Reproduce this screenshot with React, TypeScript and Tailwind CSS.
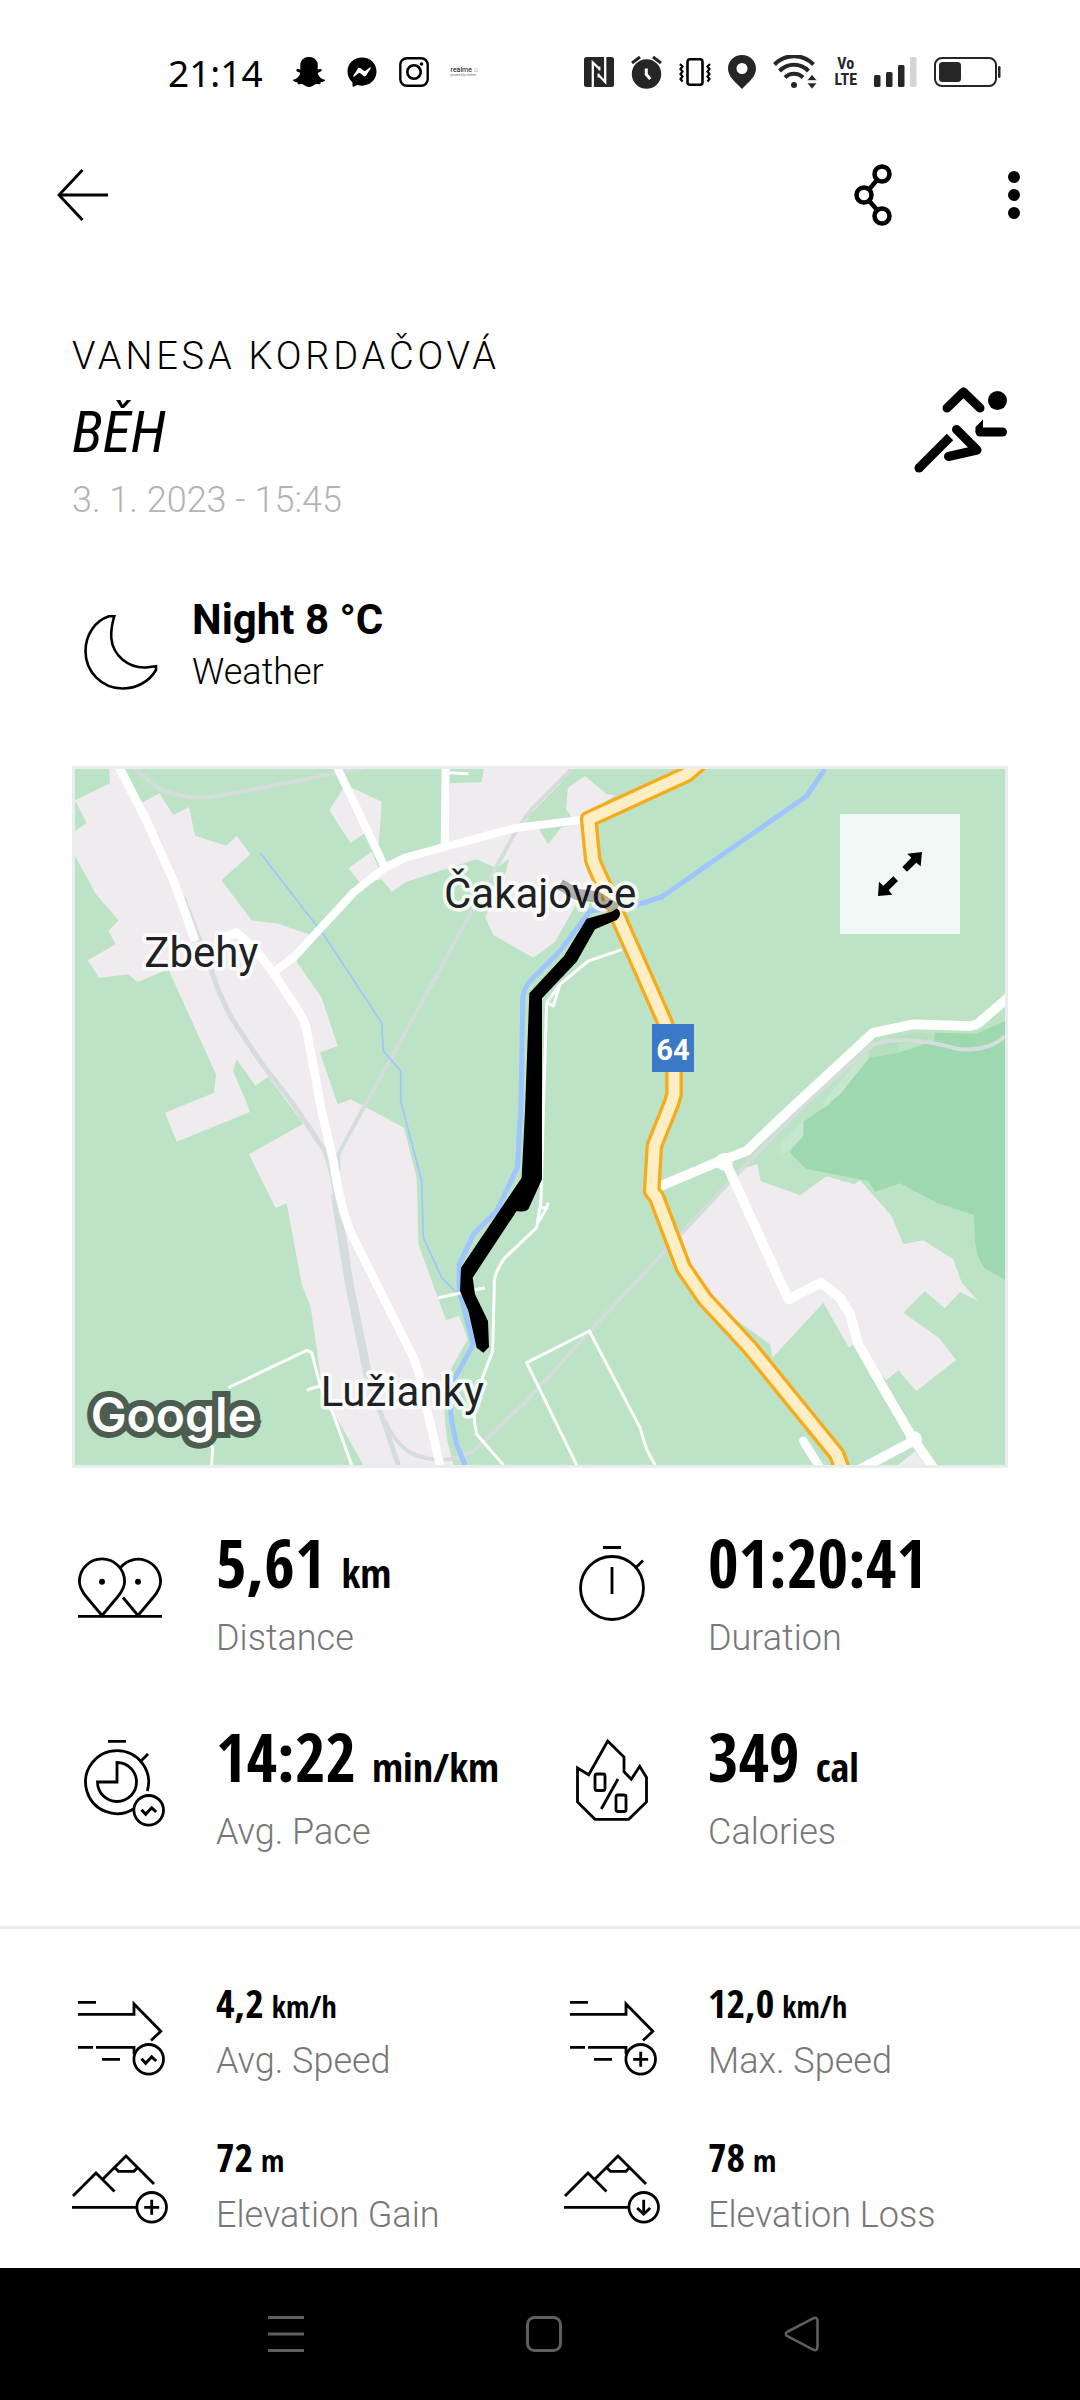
import type { ReactNode } from "react";
import { FaFacebookMessenger, FaSnapchatGhost } from "react-icons/fa";

interface Stat {
  value: string;
  unit?: string;
  label: string;
  icon: ReactNode;
}

function StatIcon({ children }: { children: ReactNode }) {
  return (
    <svg
      viewBox="0 0 96 96"
      className="size-24 shrink-0"
      fill="none"
      stroke="black"
      strokeWidth="2.8"
      aria-hidden="true"
    >
      {children}
    </svg>
  );
}

function DistanceIcon() {
  return (
    <StatIcon>
      <path d="M30 75.5 14.5 57C9.5 51 7.4 46.5 7.4 41.5a22.6 22.6 0 0 1 45.2 0c0 5-2.1 9.5-7.1 15.5z" />
      <path d="M48.7 27.3a22.6 22.6 0 0 1 39.9 14.2c0 5-2.1 9.5-7.1 15.5L66 75.5 51 57.5M6 76.3h84" />
      <circle cx="30" cy="41.7" r="3" fill="black" stroke="none" />
      <circle cx="66" cy="41.7" r="3" fill="black" stroke="none" />
    </StatIcon>
  );
}

function DurationIcon() {
  return (
    <StatIcon>
      <circle cx="48" cy="48" r="31.5" />
      <path d="M39 7.5h18M48 27v27M72 27.5l7-7" />
    </StatIcon>
  );
}

function WaveBadge() {
  return (
    <>
      <circle cx="76.7" cy="76.3" r="14.8" />
      <path d="M69.5 75.8l4.2 4.5 6-6.5 4.5 4.2" strokeWidth="3" />
    </>
  );
}

function PaceIcon() {
  return (
    <StatIcon>
      <path d="M36 7.3h18M69 27l7-7M75.3 57A31.5 31.5 0 1 0 61.5 75" />
      <path d="M45 48V28.5A19.5 19.5 0 1 1 25.5 48z" />
      <WaveBadge />
    </StatIcon>
  );
}

function CaloriesIcon() {
  return (
    <StatIcon>
      <path d="M13.5 34l11.2 6.7L43.7 7 60 23v14.7l7.3 7.6 8.4-13 6.8 11.2V68L64.7 85.3H31L13.5 68z" />
      <rect x="31" y="40" width="10" height="16.5" rx="2" />
      <rect x="52" y="61" width="10" height="16.5" rx="2" />
      <path d="M54 45 37.3 75" />
    </StatIcon>
  );
}

function SpeedLines() {
  return (
    <path d="M6 19.3h18M6 31.3h56V21l26.8 27.3L79 57.5M6 64.3h15M24 64.3h38v7M30 76.3h18" />
  );
}

function AvgSpeedIcon() {
  return (
    <StatIcon>
      <SpeedLines />
      <WaveBadge />
    </StatIcon>
  );
}

function MaxSpeedIcon() {
  return (
    <StatIcon>
      <SpeedLines />
      <circle cx="76.7" cy="76.3" r="14.8" />
      <path d="M69.2 76.3h15M76.7 68.8v15" />
    </StatIcon>
  );
}

function Mountains() {
  return (
    <>
      <path d="M1 59l23-23 18.5 18.5M31 42l23-23 28 28M42.5 30.5l4 3.8H62l3.8-4M0 70.3h64.5" />
      <circle cx="79.7" cy="70.3" r="14.8" />
    </>
  );
}

function GainIcon() {
  return (
    <StatIcon>
      <Mountains />
      <path d="M72.2 70.3h15M79.7 62.8v15" />
    </StatIcon>
  );
}

function LossIcon() {
  return (
    <StatIcon>
      <Mountains />
      <path d="M79.7 62.8v14M73.2 71l6.5 6 6.5-6" />
    </StatIcon>
  );
}

const mainStats: Stat[] = [
  { value: "5,61", unit: "km", label: "Distance", icon: <DistanceIcon /> },
  { value: "01:20:41", label: "Duration", icon: <DurationIcon /> },
  { value: "14:22", unit: "min/km", label: "Avg. Pace", icon: <PaceIcon /> },
  { value: "349", unit: "cal", label: "Calories", icon: <CaloriesIcon /> },
];

const extraStats: Stat[] = [
  { value: "4,2", unit: "km/h", label: "Avg. Speed", icon: <AvgSpeedIcon /> },
  { value: "12,0", unit: "km/h", label: "Max. Speed", icon: <MaxSpeedIcon /> },
  { value: "72", unit: "m", label: "Elevation Gain", icon: <GainIcon /> },
  { value: "78", unit: "m", label: "Elevation Loss", icon: <LossIcon /> },
];

function StatusBar() {
  return (
    <div className="flex h-36 items-center justify-between pl-[168px] pr-[79px]">
      <div className="flex items-center gap-[30px]">
        <span className="font-['Noto_Sans','Open_Sans',sans-serif] text-[37px] leading-none">21:14</span>
        <div className="flex items-center gap-[22px]">
          <FaSnapchatGhost className="size-8" />
          <FaFacebookMessenger className="size-[30px]" />
          <svg viewBox="0 0 30 30" className="size-[30px]" fill="none" stroke="black" aria-hidden="true">
            <rect x="1.3" y="1.3" width="27.4" height="27.4" rx="6.5" strokeWidth="2.4" />
            <circle cx="15" cy="15" r="6.7" strokeWidth="2.6" />
            <circle cx="22.5" cy="7" r="1.8" fill="black" stroke="none" />
          </svg>
          <div className="flex flex-col leading-none">
            <span className="text-[7px]">
              realme <span className="text-indigo-300">u</span>
            </span>
            <span className="text-[3px] text-gray-500">powered by realme</span>
          </div>
        </div>
      </div>

      <div className="flex items-center gap-[17px] text-[#262626]">
        <svg viewBox="0 0 30 30" className="size-[30px]" aria-hidden="true">
          <rect width="30" height="30" rx="2.5" fill="currentColor" />
          <path d="M8.8 30V5.5L15.5 12M21.2 0v25L14.5 18" fill="none" stroke="white" strokeWidth="2.3" />
          <path d="M15.5 9.5v4M14.5 16.5v4" stroke="white" strokeWidth="1.8" />
        </svg>
        <svg viewBox="0 0 31 34" className="h-[34px] w-[31px]" aria-hidden="true">
          <circle cx="15.5" cy="19" r="14.7" fill="currentColor" />
          <path d="M1 8l8-6M30 8l-8-6" stroke="currentColor" strokeWidth="3" />
          <path d="M15.3 13.5v6l4 4.5" stroke="white" strokeWidth="3" fill="none" />
        </svg>
        <svg viewBox="0 0 32 30" className="h-[30px] w-8" fill="none" stroke="black" aria-hidden="true">
          <rect x="8.5" y="2.2" width="15" height="25.5" rx="2.5" strokeWidth="2.6" />
          <path
            d="M1 7l2.5 2.5-2 2.5 2 2.5-2 2.5 2 2.5-2 2.5 2 2.5M31 7l-2.5 2.5 2 2.5-2 2.5 2 2.5-2 2.5 2 2.5-2 2.5"
            strokeWidth="2.2"
          />
        </svg>
        <svg viewBox="0 0 28 34" className="h-[34px] w-7" aria-hidden="true">
          <path
            d="M14 0C6 0 0 6 0 13.5 0 22 7.5 27 14 34 20.5 27 28 22 28 13.5 28 6 22 0 14 0zm0 8a5.5 5.5 0 1 1 0 11 5.5 5.5 0 0 1 0-11z"
            fill="currentColor"
          />
        </svg>
        <svg viewBox="0 0 44 34" className="h-[34px] w-11" fill="none" stroke="currentColor" aria-hidden="true">
          <path d="M1.5 9.5a27 27 0 0 1 39 0M6.5 16a20 20 0 0 1 29 0M12 22.5a12.5 12.5 0 0 1 18 0" strokeWidth="4" />
          <circle cx="21" cy="30" r="3" fill="currentColor" stroke="none" />
          <path d="M34 25.5l5-6 5 6zM34 28h10l-5 6z" fill="currentColor" stroke="white" strokeWidth="0.6" />
        </svg>
        <div className="flex flex-col items-center font-['Roboto_Condensed','Open_Sans_Condensed',sans-serif] text-[16px] font-bold leading-4">
          <span>Vo</span>
          <span>LTE</span>
        </div>
        <svg viewBox="0 0 43 30" className="h-[30px] w-[43px]" fill="currentColor" aria-hidden="true">
          <rect y="18" width="6.5" height="12" rx="1.5" />
          <rect x="12" y="15" width="6.5" height="15" rx="1.5" />
          <rect x="24" y="8" width="6.5" height="22" rx="1.5" />
          <rect x="36" width="6.5" height="30" rx="1.5" fill="#d4d4d4" />
        </svg>
        <svg viewBox="0 0 67 30" className="h-[30px] w-[67px]" aria-hidden="true">
          <rect x="1" y="1" width="61" height="28" rx="7" fill="none" stroke="currentColor" strokeWidth="2" />
          <rect x="5" y="5" width="22" height="20" rx="3.5" fill="currentColor" />
          <rect x="64" y="9" width="2.5" height="12" rx="1.2" fill="currentColor" />
        </svg>
      </div>
    </div>
  );
}

function RouteMap() {
  return (
    <div className="relative border-[3px] border-[#e9edf0] bg-[#bce3c6]">
      <svg viewBox="45 54 2790 2088" className="block w-full" role="img" aria-label="Route map">
        <rect x="45" y="54" width="2790" height="2088" fill="#bce3c6" />

        {/* built-up areas */}
        <g fill="#f0ebef">
          <path d="M148 54 150 97 45 148 80 216 45 240V315L108 430 176 508 145 540 167 580 83 628 118 680 205 670 232 693 325 655 468 970 462 1025 315 1085 350 1172 570 1083 558 1050 519 960 530 925 586 1004 625 977 730 1118 567 1210 647 1371 680 1357 725 1600 752 1668 790 1930 910 2142H1180L1160 2060 1150 1950 1175 1850 1223 1765 1198 1694 1158 1707 1075 1480 1070 1280 1032 1130 873 1045 833 1060 780 905 833 885 785 740 710 632 745 550 655 518 575 508 484 388 571 310 530 254 500 284 405 254 387 168 340 193 298 127 245 156 192 54z" />
          <path d="M808 178 850 112 880 112 965 152 957 280 912 248 872 276z" />
          <path d="M935 302 865 352 900 395 965 385 995 422 1040 392 1165 352 1250 325 1310 352 1348 322 1335 370 1300 440 1276 500 1300 552 1420 620 1485 572 1560 440 1640 420 1600 330 1575 215 1505 228 1464 280 1435 232 1380 230 1500 100 1540 54H1272L1265 93 1170 97 1155 290 1030 315 965 370z" />
          <path d="M1523 110 1575 75 1640 130 1665 132 1570 200H1535L1518 175z" />
        </g>
        <path d="M1400 200 1560 40 1640 54 1560 80 1523 110 1518 175 1535 200z" fill="#bce3c6" />

        <g transform="translate(1380 1050)">
          <path d="M1455-240 1370-202 1245-205 1240-180 1135-145 1045-130 960-20 930 5 850 62V105L808 153 858 203 1045 240 1065 272 1140 247 1250 305 1362 342 1365 420Q1370 470 1392 500L1455 537z" fill="#9dd8ae" />
          <path d="M1045-160 905 10 935 5 850 60 780 125 785 165 850 105V62L960-20 1045-125z" fill="#c5e6cf" />
          <path d="M1045-165 1180-205 1235-200 1245-188 1135-170V-145L1048-130z" fill="#b5dfbd" />
          <path d="M665 205 712 188 722 240 840 283 920 226 1003 250 1020 238 1115 345 1150 430 1210 418 1300 475 1325 545 1375 600 1320 573 1274 622 1215 570 1150 635 1258 712 1308 777 1189 870 1135 808 1100 838 1000 730 987 740 910 605 757 770 750 730 600 620 515 495 483 405zM1135 1092 1185 1050 1215 1092z" fill="#f0ebef" />
        </g>

        {/* railways */}
        <g fill="none" stroke="#d5dcdc" strokeWidth="12">
          <path d="M225 54 300 115Q390 150 470 136L620 108 910 50" />
          <path d="M1535 54 1415 175Q1370 230 1330 310L1230 490 1000 910 900 1090 835 1210V1260" />
          <path d="M370 440 455 660Q480 740 520 810L600 930 700 1060 795 1200Q820 1270 830 1350L870 1610 920 1860 960 1980 1015 2142" strokeWidth="15" />
          <path d="M825 1330 870 1610 925 1880" strokeWidth="26" />
          <path d="M975 2010Q1000 2070 1050 2105 1150 2150 1240 2100L1400 1950 1590 1740 2040 1260 2235 1060 2440 880Q2540 850 2700 895 2790 900 2835 855" />
        </g>

        {/* rivers */}
        <g fill="none" stroke="#9fc5ff" strokeLinejoin="round">
          <path d="M2295 54 2240 135 1805 438 1735 460 1590 480 1500 600 1410 690Q1385 720 1388 760L1383 1050 1372 1250 1310 1380 1240 1450 1198 1540V1620L1240 1780 1185 1880Q1165 1940 1175 2010L1190 2080 1215 2142" strokeWidth="15" />
          <path d="M600 305 790 550 965 815 970 900 1022 960V1050L1085 1290 1090 1460 1145 1580 1190 1625" strokeWidth="5" />
        </g>

        {/* minor roads */}
        <g fill="none" stroke="white" strokeWidth="9" strokeLinejoin="round">
          <path d="M505 1910 600 1865 740 1798 755 1805 780 1900 820 1990 875 2142M740 1917 780 1905M455 2142 458 2090 430 2040M1135 1640 1275 1610M1165 65 1225 68" />
          <path d="M1685 596 1585 630 1500 700 1460 755 1450 1080 1443 1350 1430 1430 1335 1520Q1300 1570 1303 1600L1298 1800 1260 1900Q1230 1960 1250 2050L1330 2142M1500 700 1480 765 1460 755M1465 1355 1455 1380 1430 1420M1440 1370H1465" />
          <path d="M1550 2142 1400 1835 1588 1740 1740 2030 1760 2095 1785 2142" />
        </g>

        {/* main roads */}
        <g fill="none" stroke="white" strokeWidth="26" strokeLinejoin="round">
          <path d="M178 50 260 210 345 400 395 540 405 570M490 560 530 545 590 600 640 665 715 780Q740 820 742 850L785 1080 820 1230Q840 1370 875 1450L1060 1820Q1080 1870 1090 1930L1140 2142" />
          <path d="M640 665 705 615 880 425 975 350 1035 320 1370 230 1580 205" strokeWidth="24" />
          <path d="M832 50 975 350M1157 50 1154 285" strokeWidth="24" />
          <path d="M1795 1308 1980 1230 2060 1200 2180 1085 2440 845 2560 820 2730 825Q2750 823 2765 808L2850 735M1995 1230 2185 1645 2283 1595 2340 1640 2370 1690 2395 1780 2475 1920 2560 2065 2620 2150M2560 2070 2400 2155" strokeWidth="29" />
          <path d="M2230 2070 2280 2150" strokeWidth="26" strokeLinecap="round" />
        </g>
        <circle cx="1992" cy="1232" r="26" fill="white" />
        <circle cx="2562" cy="2065" r="24" fill="white" />

        <g fill="none" strokeLinejoin="round">
          <path d="M1920 35 1880 70 1586 205 1598 325Q1605 350 1640 420L1815 815 1842 900V1030L1835 1055 1783 1185 1775 1320 1790 1340 1870 1550 1935 1645 2070 1790 2330 2110 2345 2150" stroke="#f5ab1b" strokeWidth="53" />
          <path d="M1920 35 1880 70 1586 205 1598 325Q1605 350 1640 420L1815 815 1842 900V1030L1835 1055 1783 1185 1775 1320 1790 1340 1870 1550 1935 1645 2070 1790 2330 2110 2345 2150" stroke="#ffedc3" strokeWidth="33" />
        </g>

        {/* recorded track */}
        <path
          d="M1655 482 1580 503 1512 615 1408 727 1395 1080 1385 1280 1203 1550 1200 1620 1225 1680 1250 1790 1270 1805 1287 1788 1284 1710 1245 1630 1238 1580 1370 1380Q1395 1385 1405 1375L1446 1285V742L1550 632 1605 535 1670 507Q1690 490 1672 472z"
          fill="black"
        />

        <rect x="1776" y="819" width="126" height="144" fill="#3c78c8" />
        <text x="1839" y="926" textAnchor="middle" className="font-['Roboto',sans-serif] text-[87px] font-bold" fill="white">
          64
        </text>

        <g
          className="font-['Roboto',sans-serif] text-[126px]"
          fill="#202124"
          stroke="white"
          strokeOpacity="0.8"
          strokeWidth="22"
          strokeLinejoin="round"
          paintOrder="stroke"
        >
          <text x="253" y="647">Zbehy</text>
          <text x="1152" y="471">Čakajovce</text>
          <text x="782" y="1965">Lužianky</text>
        </g>
        <path d="M1500 400 1550 430 1610 438 1670 475" fill="none" stroke="black" strokeOpacity="0.3" strokeWidth="34" />

        <text
          x="92"
          y="2044"
          className="font-['Inter',sans-serif] text-[144px] font-semibold"
          fill="white"
          stroke="#4c5c50"
          strokeWidth="36"
          paintOrder="stroke"
        >
          Google
        </text>
      </svg>
      <button
        type="button"
        aria-label="Expand map"
        className="absolute right-[45px] top-[45px] size-[120px] bg-[#f1f7f4]"
      >
        <svg viewBox="0 0 360 360" className="size-full" aria-hidden="true">
          <path d="M246 114 202 119 214 131 187 159 201 173 229 146 242 157zM114 246 117 203 130 215 160 187 174 201 146 229 157 242z" />
        </svg>
      </button>
    </div>
  );
}

function NavBar() {
  return (
    <nav className="mt-auto flex h-[132px] items-center justify-center gap-[222px] bg-black pl-2">
      <button type="button" aria-label="Recent apps">
        <svg viewBox="0 0 36 36" className="size-9" fill="none" stroke="#5e5e5e" strokeWidth="3">
          <path d="M0 1.5h36M0 18h36M0 34.5h36" />
        </svg>
      </button>
      <button type="button" aria-label="Home">
        <svg viewBox="0 0 36 36" className="size-9" fill="none" stroke="#5e5e5e" strokeWidth="3">
          <rect x="1.5" y="1.5" width="33" height="33" rx="7" />
        </svg>
      </button>
      <button type="button" aria-label="Back">
        <svg viewBox="0 0 36 36" className="size-9" fill="none" stroke="#5e5e5e" strokeWidth="2.6">
          <path d="M3 16 29.5 2.2Q33.5 1 33.5 5V31Q33.5 35 29.5 33.8L3 20Q.5 18 3 16z" />
        </svg>
      </button>
    </nav>
  );
}

export default function App() {
  return (
    <div className="flex min-h-screen flex-col bg-white font-['Roboto',sans-serif] text-black">
      <StatusBar />

      <header className="flex h-[102px] items-center justify-between pl-[57px] pr-[54px]">
        <button type="button" aria-label="Back">
          <svg viewBox="0 0 51 54" className="h-[54px] w-[51px]" fill="none" stroke="black" strokeWidth="2.8">
            <path d="M25.5 2 2 27l23.5 25M2 27h49" />
          </svg>
        </button>
        <div className="flex items-center gap-[93px]">
          <button type="button" aria-label="Share">
            <svg viewBox="0 0 60 62" className="h-[62px] w-[60px]" fill="none" stroke="black" strokeWidth="4.5">
              <circle cx="33" cy="10" r="7.5" />
              <circle cx="15" cy="31" r="7.5" />
              <circle cx="33" cy="52" r="7.5" />
              <path d="M20 25.5 28 16M20 36.5l8 9.500" />
            </svg>
          </button>
          <button type="button" aria-label="More options">
            <svg viewBox="0 0 24 48" className="h-12 w-6">
              <circle cx="12" cy="6" r="6" />
              <circle cx="12" cy="24" r="6" />
              <circle cx="12" cy="42" r="6" />
            </svg>
          </button>
        </div>
      </header>

      <main className="pt-[86px]">
        <section className="flex items-center justify-between px-[72px]">
          <div>
            <p className="text-[38px] font-light leading-[48px] tracking-widest">VANESA KORDAČOVÁ</p>
            <h1 className="mt-5 font-['Roboto_Condensed','Open_Sans_Condensed',sans-serif] text-[58px] italic leading-[64px]">
              BĚH
            </h1>
            <p className="mt-3 text-[36px] font-light leading-[48px] text-[#b1b4b7]">3. 1. 2023 - 15:45</p>
          </div>
          <svg
            viewBox="0 0 94 88"
            className="mt-1 h-[88px] w-[94px]"
            fill="none"
            stroke="black"
            strokeWidth="9"
            strokeLinecap="round"
            strokeLinejoin="round"
            aria-hidden="true"
          >
            <path d="M33 22 49.5 6 66 22" />
            <path d="M42.5 43.5 63 64 34.5 70.5" />
            <path d="M66 46h22.5" />
            <path d="M61.5 46v-5L69 33.5V46z" fill="black" stroke="none" />
            <path d="M5 82 36 51" strokeLinecap="butt" />
            <circle cx="5" cy="82" r="4.5" fill="black" stroke="none" />
            <circle cx="83.5" cy="14.5" r="9.5" fill="black" stroke="none" />
          </svg>
        </section>

        <section className="mt-[72px] flex gap-6 px-[72px]">
          <svg
            viewBox="0 0 96 96"
            className="mt-2 size-24"
            fill="none"
            stroke="black"
            strokeWidth="2.6"
            aria-hidden="true"
          >
            <path d="M36.9 12.3H42.2C40 20 38.8 28 39.3 34 40.8 52 56.8 64 73.4 63.5 77.5 63.5 80 62.5 84 62.2V66C77 78 64 84.5 50.6 84.5 30 84.5 13.5 68 13.5 47 13.5 31 22.8 17 36.9 12.3z" />
          </svg>
          <div>
            <p className="text-[42px] font-bold leading-[48px]">Night 8 °C</p>
            <p className="mt-1 text-[36px] font-light leading-[48px]">Weather</p>
          </div>
        </section>

        <section className="px-[72px] pt-[66px]">
          <RouteMap />
        </section>

        <section className="grid grid-cols-2 gap-y-[58px] pb-[70px] pl-[72px] pr-6 pt-[58px]">
          {mainStats.map((stat) => (
            <div key={stat.label} className="flex items-start gap-12">
              <div className="pt-3.5">{stat.icon}</div>
              <div>
                <p className="flex items-baseline gap-4 font-['Open_Sans_Condensed','Roboto_Condensed',sans-serif] text-[66px] font-bold leading-[72px]">
                  {stat.value}
                  {stat.unit && <span className="text-[40px] leading-none">{stat.unit}</span>}
                </p>
                <p className="mt-4 text-[36px] font-light leading-[48px] text-[#777777]">{stat.label}</p>
              </div>
            </div>
          ))}
        </section>

        <hr className="border-t-[3px] border-[#ebecf0]" />

        <section className="grid grid-cols-2 gap-y-[52px] pb-6 pl-[72px] pr-6 pt-[54px]">
          {extraStats.map((stat) => (
            <div key={stat.label} className="flex items-start gap-12">
              {stat.icon}
              <div>
                <p className="flex items-baseline gap-2 font-['Open_Sans_Condensed','Roboto_Condensed',sans-serif] text-[40px] font-bold leading-[40px]">
                  {stat.value}
                  {stat.unit && <span className="text-[30px] leading-none">{stat.unit}</span>}
                </p>
                <p className="mt-3.5 text-[36px] font-light leading-[48px] text-[#777777]">{stat.label}</p>
              </div>
            </div>
          ))}
        </section>
      </main>

      <NavBar />
    </div>
  );
}
